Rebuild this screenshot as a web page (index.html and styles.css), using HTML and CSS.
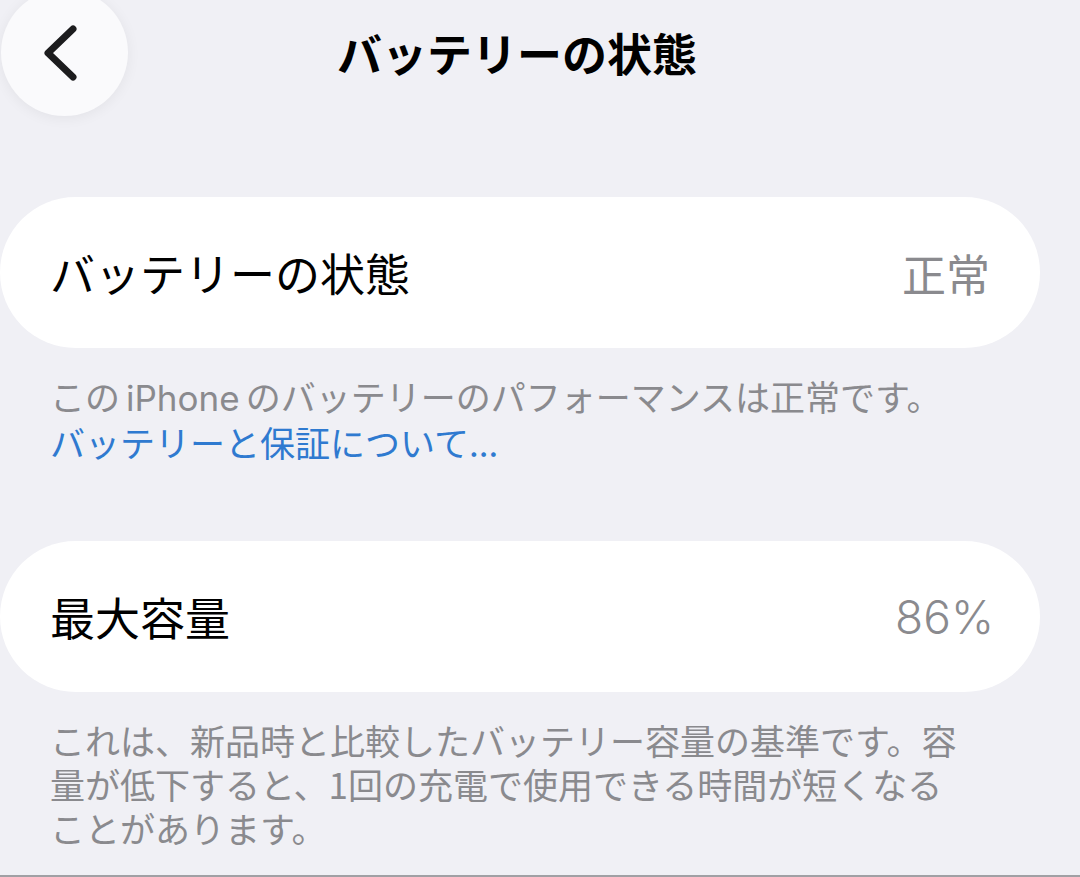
FILE: index.html
```html
<!DOCTYPE html>
<html lang="ja">

<head>
    <meta charset="UTF-8">
    <meta name="viewport" content="width=device-width, initial-scale=1.0">
    <title>バッテリーの状態</title>
    <link rel="stylesheet" href="styles.css">
</head>

<body>
    <header class="nav-bar">
        <div class="back-button">
            <svg width="127" height="127" viewBox="0 0 127 127">
                <path d="M72 40 L47 64 L72 88" fill="none" stroke="#1c1c1e" stroke-width="7"
                    stroke-linecap="round" stroke-linejoin="round" />
            </svg>
        </div>
        <h1 class="nav-title">バッテリーの状態</h1>
    </header>

    <main class="settings">
        <section class="group">
            <div class="cell">
                <span class="cell-label">バッテリーの状態</span>
                <span class="cell-value">正常</span>
            </div>
            <p class="group-footer">
                この<span class="latin">iPhone</span>のバッテリーのパフォーマンスは正常です。<br>
                <a class="footer-link" href="#">バッテリーと保証について...</a>
            </p>
        </section>

        <section class="group">
            <div class="cell">
                <span class="cell-label">最大容量</span>
                <span class="cell-value number">86%</span>
            </div>
            <p class="group-footer">
                これは、新品時と比較したバッテリー容量の基準です。容<br>
                量が低下すると、1回の充電で使用できる時間が短くなる<br>
                ことがあります。
            </p>
        </section>
    </main>

    <div class="bottom-edge"></div>
</body>

</html>
```

FILE: styles.css
```css
body {
    margin: 0;
    padding: 0;
    width: 1080px;
    height: 877px;
    overflow: hidden;
    background-color: #f0f0f5;
    font-family: "Noto Sans CJK JP", "Noto Sans", sans-serif;
    color: #000000;
}

.nav-bar {
    height: 105px;
    display: flex;
    align-items: center;
}

.back-button {
    width: 127px;
    height: 127px;
    flex-shrink: 0;
    margin-left: 1px;
    border-radius: 50%;
    background-color: #fafafc;
    box-shadow: 0 2px 14px rgba(0, 0, 0, 0.06);
}

.back-button svg {
    display: block;
}

.nav-title {
    margin: 0 0 0 209px;
    font-size: 45px;
    font-weight: 700;
    line-height: 1;
    white-space: nowrap;
}

.settings {
    margin-top: 92px;
}

.group + .group {
    margin-top: 77px;
}

.cell {
    width: 1040px;
    height: 151px;
    box-sizing: border-box;
    padding: 0 50px;
    display: flex;
    align-items: center;
    justify-content: space-between;
    background-color: #ffffff;
    border-radius: 76px;
}

.cell-label {
    font-size: 45px;
    line-height: 1;
}

.cell-value {
    font-size: 44px;
    line-height: 1;
    color: #8a8a8e;
}

.cell-value.number {
    font-family: "Inter", "Noto Sans", sans-serif;
    font-size: 46px;
    font-weight: 300;
    margin-right: -4px;
}

.group-footer {
    margin: 0;
    padding: 26px 0 0 50px;
    font-size: 35px;
    line-height: 44px;
    color: #8a8a8e;
    white-space: nowrap;
}

.latin {
    font-family: "Inter", "Noto Sans", sans-serif;
    margin: 0 6px;
}

.footer-link {
    color: #2f7ad0;
    text-decoration: none;
}

.bottom-edge {
    margin-top: 25px;
    height: 2px;
    background-color: #a0a0a4;
}
```
